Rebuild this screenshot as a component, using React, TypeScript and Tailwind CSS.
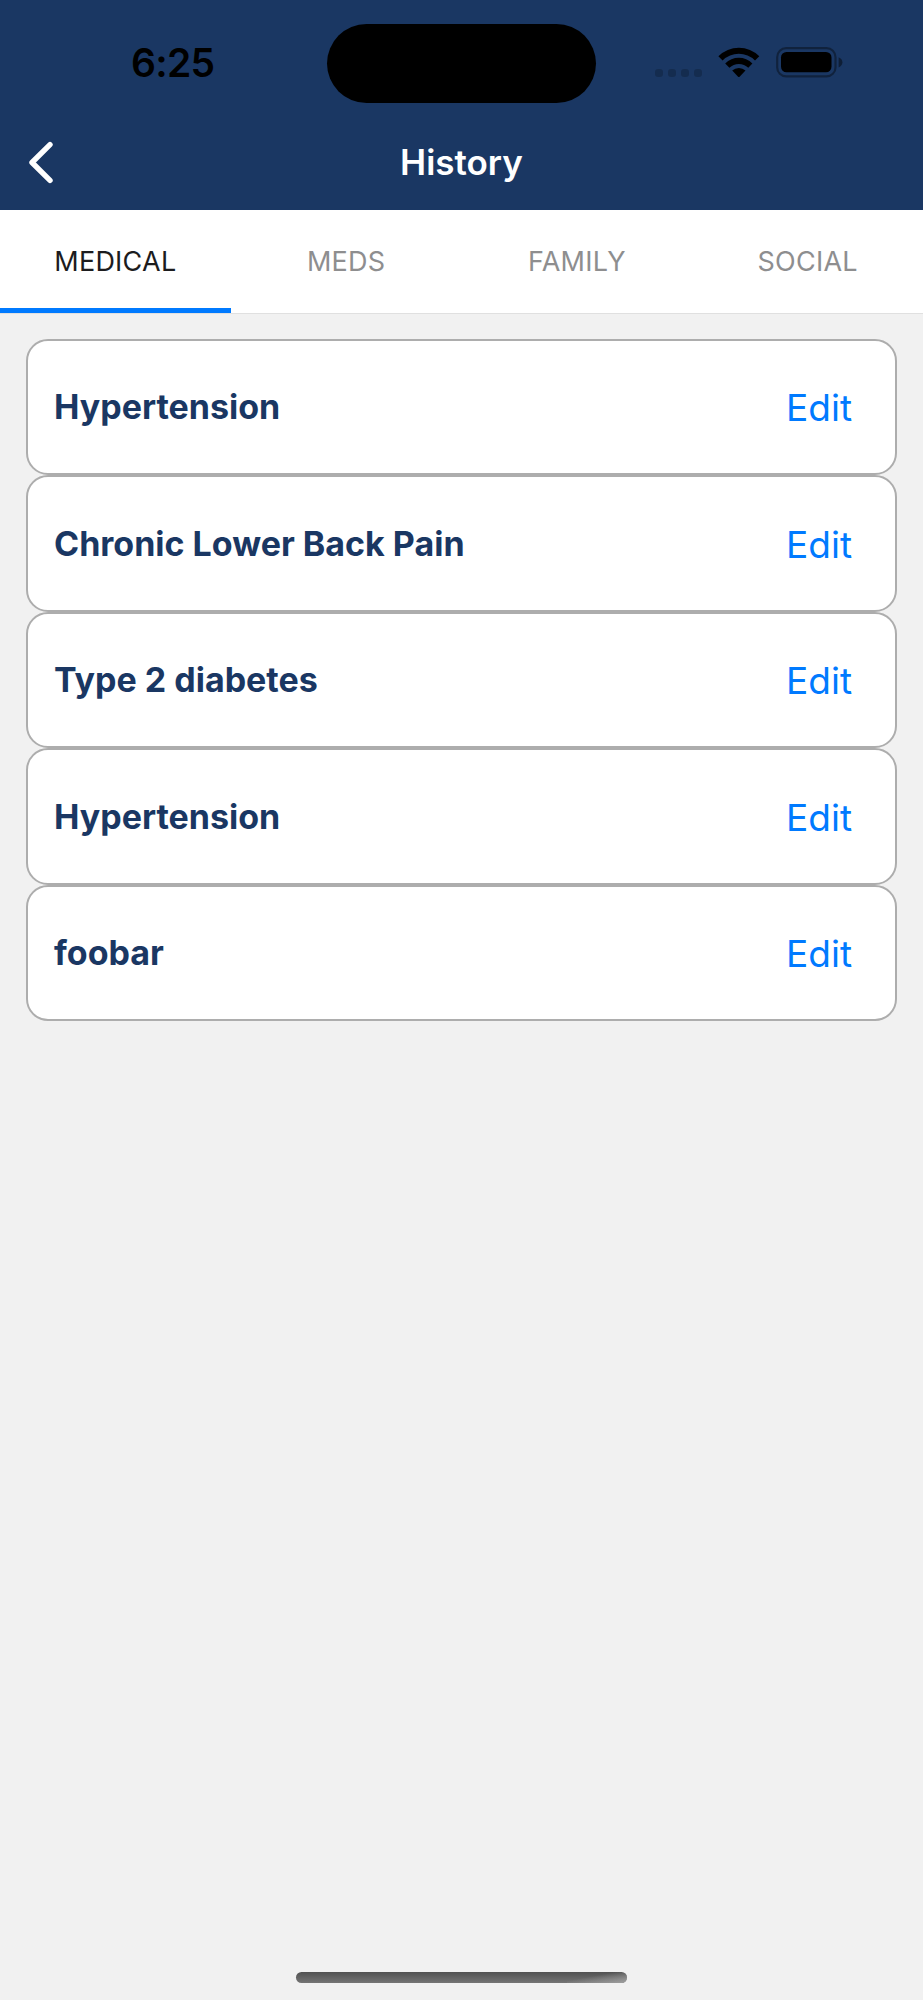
import React, { useState } from "react";

const tabs = ["MEDICAL", "MEDS", "FAMILY", "SOCIAL"];

const medicalHistory = [
  { id: 1, name: "Hypertension" },
  { id: 2, name: "Chronic Lower Back Pain" },
  { id: 3, name: "Type 2 diabetes" },
  { id: 4, name: "Hypertension" },
  { id: 5, name: "foobar" },
];

const WifiIcon: React.FC = () => (
  <svg width="42" height="31" viewBox="0 0 42 31" fill="black">
    <path d="M0.4 9.2 A29 29 0 0 1 41.3 9.2 L37 13.4 A23.2 23.2 0 0 0 4.6 13.4 Z" />
    <path d="M7.2 16.4 A19.4 19.4 0 0 1 34.4 16.4 L30.3 20.7 A13.6 13.6 0 0 0 11.4 20.7 Z" />
    <path d="M14.2 23.6 A9.6 9.6 0 0 1 27.5 23.6 L21.6 29.7 Q20.8 30.4 20.1 29.7 Z" />
  </svg>
);

const BatteryIcon: React.FC = () => (
  <svg width="68" height="31" viewBox="0 0 68 31">
    <rect
      x="1.2"
      y="1.2"
      width="58.3"
      height="28.2"
      rx="9"
      fill="none"
      stroke="black"
      strokeOpacity="0.38"
      strokeWidth="2.2"
    />
    <rect x="5" y="5" width="50.5" height="20.3" rx="5.5" fill="black" />
    <path
      d="M62.6 10.2 Q66.4 11.8 66.4 15.3 Q66.4 18.8 62.6 20.4 Z"
      fill="black"
      fillOpacity="0.45"
    />
  </svg>
);

const StatusBar: React.FC = () => (
  <div className="flex h-[127px] items-start">
    <div className="w-[327px] pt-[39px] pl-[131px] text-[39px] leading-[48px] font-semibold text-black">
      <span className="tracking-[-0.7px]">6:25</span>
    </div>
    <div className="mt-6 h-[79px] w-[269px] rounded-full bg-black" />
    <div className="ml-[59px] mt-[69px] flex gap-[5px]">
      {[0, 1, 2, 3].map((dot) => (
        <div key={dot} className="h-2 w-2 rounded-[3px] bg-black/20" />
      ))}
    </div>
    <div className="ml-4 mt-[46.5px]">
      <WifiIcon />
    </div>
    <div className="ml-4 mt-[46.5px]">
      <BatteryIcon />
    </div>
  </div>
);

const Header: React.FC = () => (
  <div className="grid h-[83px] grid-cols-3">
    <button className="flex items-start pl-[27.5px] pt-[14px]">
      <svg
        width="26"
        height="43"
        viewBox="0 0 26 43"
        fill="none"
        stroke="white"
        strokeWidth="5.4"
        strokeLinecap="round"
        strokeLinejoin="round"
      >
        <path d="M22 3.6 L4 21.5 L22 39.4" />
      </svg>
    </button>
    <h1 className="pt-[11px] text-center text-[35px] leading-[48px] font-semibold text-white">
      History
    </h1>
  </div>
);

const App: React.FC = () => {
  const [activeTab, setActiveTab] = useState("MEDICAL");

  return (
    <div className="flex h-[2000px] w-[923px] flex-col overflow-hidden bg-[#f1f1f1] font-['Inter',sans-serif]">
      <header className="bg-[#1a3763]">
        <StatusBar />
        <Header />
      </header>

      {/* Tabs */}
      <nav className="grid h-[104px] grid-cols-4 border-b border-[#e0e0e0] bg-white">
        {tabs.map((tab) => (
          <button
            key={tab}
            onClick={() => setActiveTab(tab)}
            className={`border-b-[5px] pt-[6px] text-[27px] font-normal tracking-[0.25px] ${
              activeTab === tab
                ? "border-[#007aff] text-[#1c1c1e]"
                : "border-transparent text-[#8e8e8f]"
            }`}
          >
            {tab}
          </button>
        ))}
      </nav>

      {/* Conditions */}
      <main className="flex-1 px-[26px] pt-[24.5px]">
        {medicalHistory.map((item) => (
          <div
            key={item.id}
            className="flex h-[136.5px] items-center justify-between rounded-[22px] border-2 border-[#adadad] bg-white pl-[26px] pr-[43px]"
          >
            <span className="text-[34px] font-bold text-[#1a3763]">
              {item.name}
            </span>
            <button className="pt-[2px] text-[37px] text-[#007aff]">
              Edit
            </button>
          </div>
        ))}
      </main>

      {/* Home indicator */}
      <div className="mx-auto mb-[17px] h-[11px] w-[331px] overflow-hidden rounded-full bg-linear-to-b from-[#515151] to-[#757575]">
        <div className="ml-auto h-full w-[60px] bg-linear-to-br from-transparent from-40% to-[#a0a0a0]" />
      </div>
    </div>
  );
};

export default App;
